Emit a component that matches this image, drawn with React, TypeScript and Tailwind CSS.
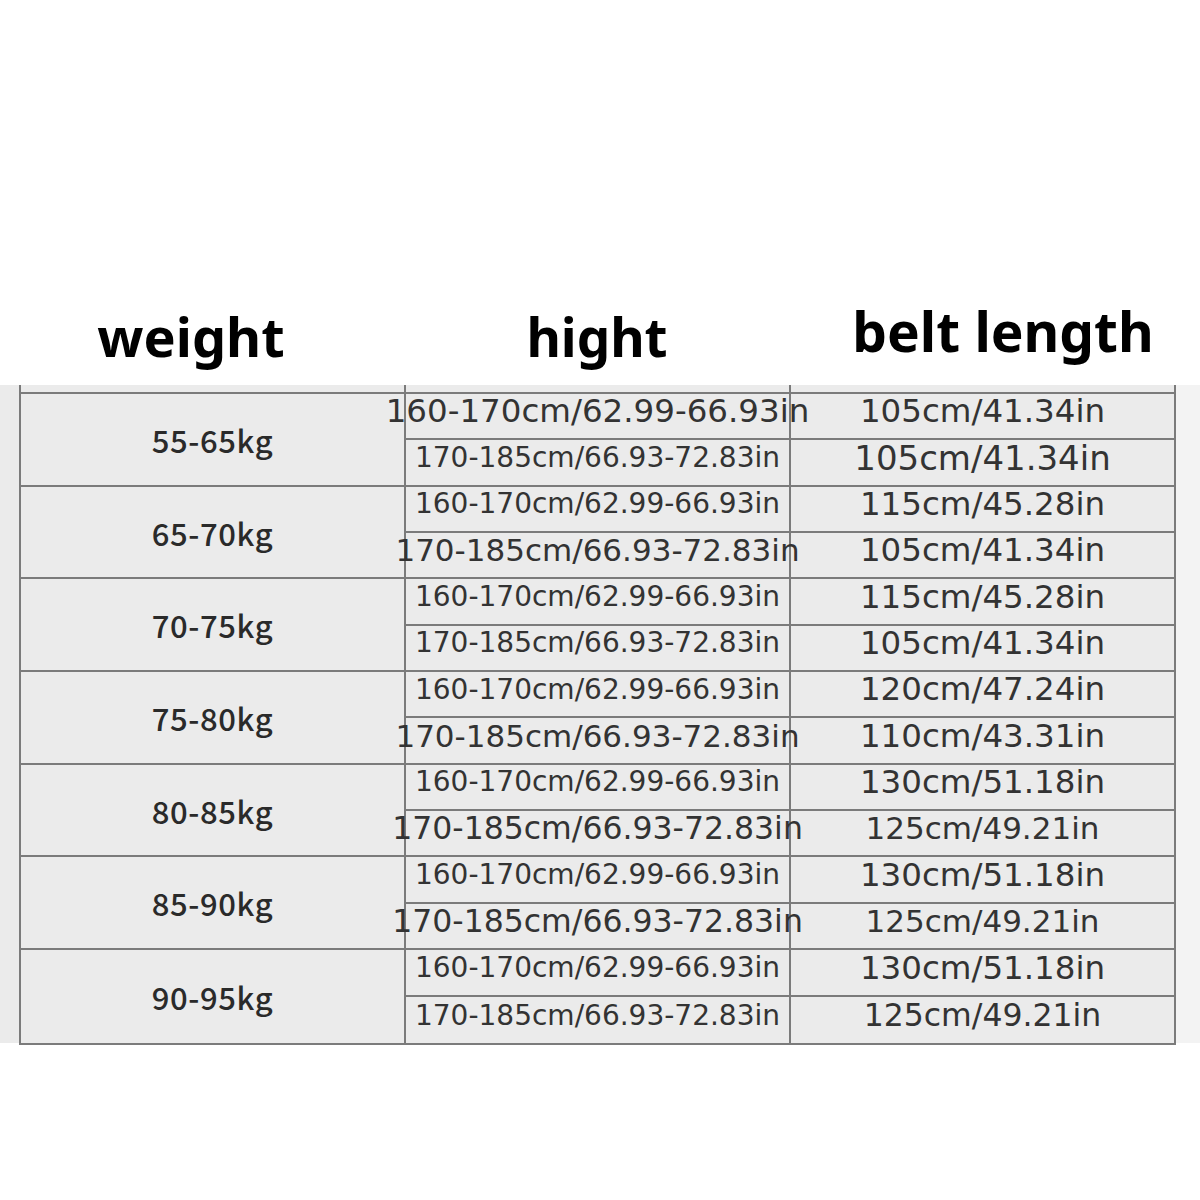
// Belt size chart — weight / height bands mapped to a belt length.
// Each weight band splits into two height rows; the text sizes vary row by row
// the way the source chart does, so they live in the data as full class names.

interface SubRow {
  hight: string
  hightSize: string
  belt: string
  beltSize: string
}

interface Group {
  weight: string
  rows: [SubRow, SubRow]
}

const GROUPS: Group[] = [
  {
    weight: '55-65kg',
    rows: [
      { hight: '160-170cm/62.99-66.93in', hightSize: 'text-[32.5px]', belt: '105cm/41.34in', beltSize: 'text-[32.5px]' },
      { hight: '170-185cm/66.93-72.83in', hightSize: 'text-[28px]', belt: '105cm/41.34in', beltSize: 'text-[34px]' },
    ],
  },
  {
    weight: '65-70kg',
    rows: [
      { hight: '160-170cm/62.99-66.93in', hightSize: 'text-[28px]', belt: '115cm/45.28in', beltSize: 'text-[32.5px]' },
      { hight: '170-185cm/66.93-72.83in', hightSize: 'text-[31px]', belt: '105cm/41.34in', beltSize: 'text-[32.5px]' },
    ],
  },
  {
    weight: '70-75kg',
    rows: [
      { hight: '160-170cm/62.99-66.93in', hightSize: 'text-[28px]', belt: '115cm/45.28in', beltSize: 'text-[32.5px]' },
      { hight: '170-185cm/66.93-72.83in', hightSize: 'text-[28px]', belt: '105cm/41.34in', beltSize: 'text-[32.5px]' },
    ],
  },
  {
    weight: '75-80kg',
    rows: [
      { hight: '160-170cm/62.99-66.93in', hightSize: 'text-[28px]', belt: '120cm/47.24in', beltSize: 'text-[32.5px]' },
      { hight: '170-185cm/66.93-72.83in', hightSize: 'text-[31px]', belt: '110cm/43.31in', beltSize: 'text-[32.5px]' },
    ],
  },
  {
    weight: '80-85kg',
    rows: [
      { hight: '160-170cm/62.99-66.93in', hightSize: 'text-[28px]', belt: '130cm/51.18in', beltSize: 'text-[32.5px]' },
      { hight: '170-185cm/66.93-72.83in', hightSize: 'text-[31.5px]', belt: '125cm/49.21in', beltSize: 'text-[31px]' },
    ],
  },
  {
    weight: '85-90kg',
    rows: [
      { hight: '160-170cm/62.99-66.93in', hightSize: 'text-[28px]', belt: '130cm/51.18in', beltSize: 'text-[32.5px]' },
      { hight: '170-185cm/66.93-72.83in', hightSize: 'text-[31.5px]', belt: '125cm/49.21in', beltSize: 'text-[31px]' },
    ],
  },
  {
    weight: '90-95kg',
    rows: [
      { hight: '160-170cm/62.99-66.93in', hightSize: 'text-[28px]', belt: '130cm/51.18in', beltSize: 'text-[32.5px]' },
      { hight: '170-185cm/66.93-72.83in', hightSize: 'text-[28px]', belt: '125cm/49.21in', beltSize: 'text-[31.5px]' },
    ],
  },
]

const cellFont = "font-['DejaVu_Sans',sans-serif]"

function GroupRow({ g }: { g: Group }) {
  return (
    <div className="flex h-[92.7px] border-b-2 border-[#7b7b7b] last:border-b-0">
      <div className="w-[385px] border-r-2 border-[#7b7b7b] flex items-center justify-center">
        <span className="font-['Noto_Sans_CJK_SC',sans-serif] font-medium text-[31px] leading-none text-[#2a2a2a] tracking-[0.6px]">
          {g.weight}
        </span>
      </div>
      <div className="flex-1 flex flex-col">
        {g.rows.map((r, i) => (
          <div key={i} className={`flex flex-1 ${i === 0 ? 'border-b-2 border-[#7b7b7b]' : ''}`}>
            <div className="w-[385px] border-r-2 border-[#7b7b7b] flex items-center justify-center pb-[9px]">
              <span className={`${cellFont} ${r.hightSize} leading-none text-[#333] whitespace-nowrap`}>{r.hight}</span>
            </div>
            <div className="flex-1 flex items-center justify-center pb-[9px]">
              <span className={`${cellFont} ${r.beltSize} leading-none text-[#333] whitespace-nowrap`}>{r.belt}</span>
            </div>
          </div>
        ))}
      </div>
    </div>
  )
}

export default function App() {
  return (
    <div className="w-[1200px] h-[1200px] bg-white overflow-hidden">
      {/* Column headings */}
      <div className="h-[385px] flex items-end font-['Noto_Sans',sans-serif] font-bold text-black leading-none">
        <div className="w-[382px] text-center text-[54px] pb-[22px]">weight</div>
        <div className="w-[430px] text-center text-[53px] pb-[22px]">hight</div>
        <div className="w-[382px] text-center text-[55px] pb-[27px]">belt length</div>
      </div>

      {/* Grey band holding the table */}
      <div className="h-[658px] flex bg-[#ebebeb]">
        <div className="w-[1176px] pl-[19px]">
          <div className="w-[1157px] border-x-2 border-b-2 border-[#7b7b7b]">
            <div className="flex h-[7px]">
              <div className="w-[385px] border-r-2 border-[#7b7b7b]" />
              <div className="w-[385px] border-r-2 border-[#7b7b7b]" />
              <div className="flex-1" />
            </div>
            <div className="border-t-2 border-[#7b7b7b]">
              {GROUPS.map((g) => (
                <GroupRow key={g.weight} g={g} />
              ))}
            </div>
          </div>
        </div>
        <div className="flex-1 bg-[#f3f3f3]" />
      </div>
    </div>
  )
}
